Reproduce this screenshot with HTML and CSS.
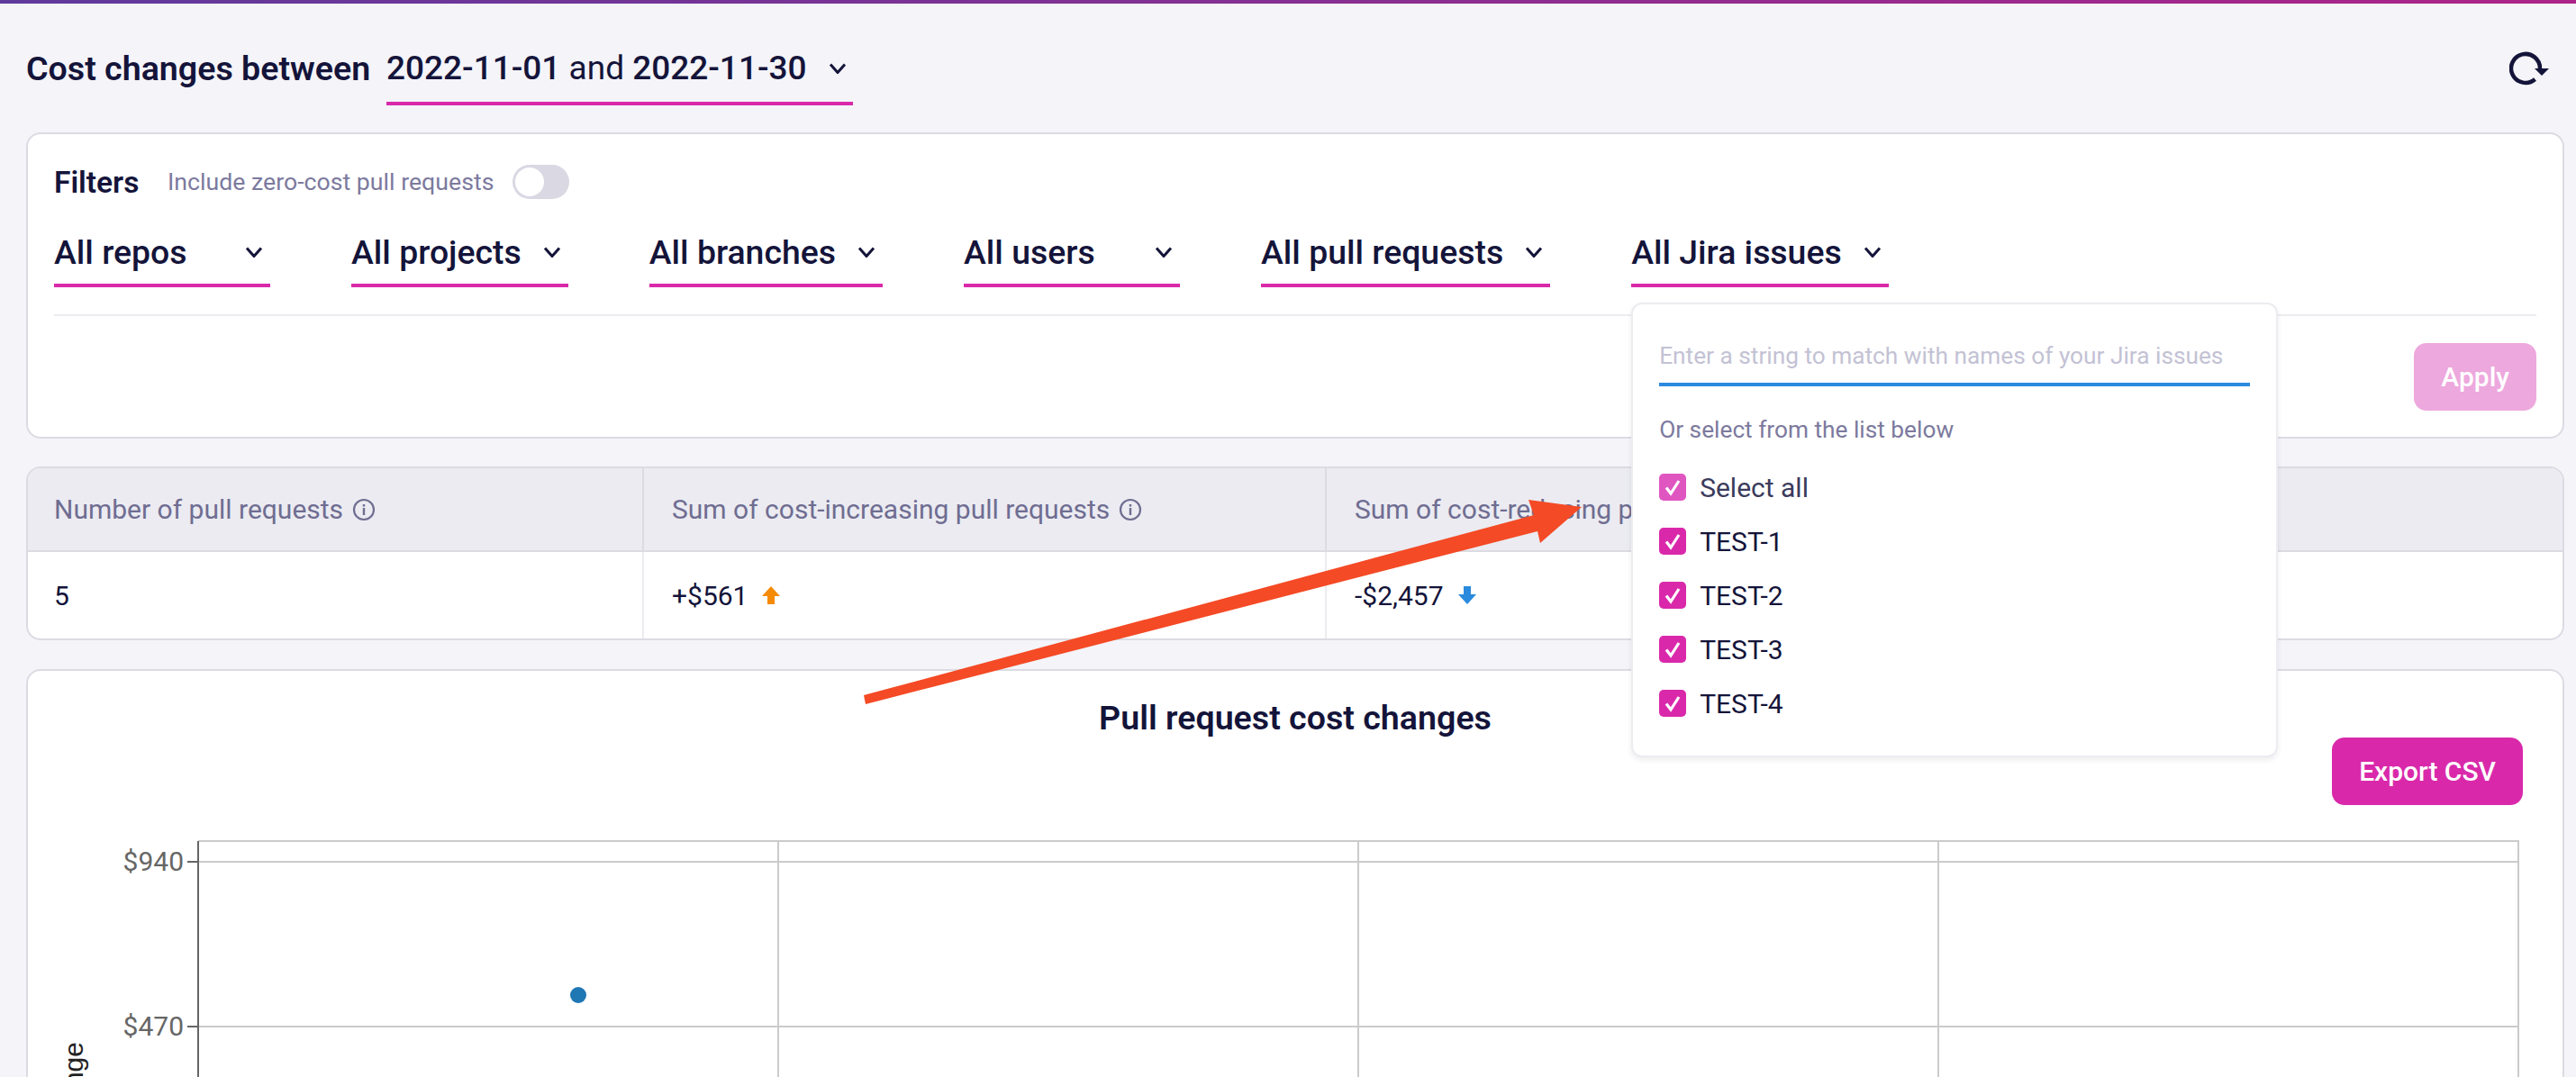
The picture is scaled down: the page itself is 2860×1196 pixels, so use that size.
FILE: index.html
```html
<!DOCTYPE html>
<html lang="en">
<head>
    <meta charset="UTF-8">
    <link rel="stylesheet" href="styles.css">
    <title>Cost changes</title>
</head>
<body>
    <svg class="defs" width="0" height="0">
        <symbol id="chev" viewBox="0 0 20 12"><path d="M2 1.500 10 10.500 18 1.500" fill="none" stroke="currentColor" stroke-width="3"/></symbol>
        <symbol id="info" viewBox="0 0 26 26"><circle cx="13" cy="13" r="11" fill="none" stroke="currentColor" stroke-width="2.200"/><rect x="11.800" y="11" width="2.400" height="8" fill="currentColor"/><rect x="11.800" y="7" width="2.400" height="2.500" fill="currentColor"/></symbol>
        <symbol id="tick" viewBox="0 0 30 30"><path d="M8 15.500 13 22 22 8" fill="none" stroke="#fff" stroke-width="3.200"/></symbol>
        <symbol id="arrow" viewBox="0 0 20 20"><path d="M10 0 20 11H14V20H6V11H0Z" fill="currentColor"/></symbol>
    </svg>

    <div class="topbar"></div>

    <main class="page">
        <header class="head">
            <h1 class="head-title">Cost changes between</h1>
            <div class="select select-date">
                <span><b>2022-11-01</b> and <b>2022-11-30</b></span>
                <svg class="chev"><use href="#chev"/></svg>
            </div>
            <svg class="refresh" viewBox="0 0 44 44">
                <path d="M28.500 33A16 16 0 1 1 34 21" fill="none" stroke="currentColor" stroke-width="4.500"/>
                <path d="M28 21H44L36 29Z" fill="currentColor"/>
            </svg>
        </header>

        <section class="card filters">
            <div class="filters-top">
                <h2 class="filters-title">Filters</h2>
                <span class="filters-hint">Include zero-cost pull requests</span>
                <span class="toggle"><span class="knob"></span></span>
            </div>
            <div class="filters-row">
                <div class="select select-m"><span>All repos</span><svg class="chev"><use href="#chev"/></svg></div>
                <div class="select select-m"><span>All projects</span><svg class="chev"><use href="#chev"/></svg></div>
                <div class="select select-m"><span>All branches</span><svg class="chev"><use href="#chev"/></svg></div>
                <div class="select select-m"><span>All users</span><svg class="chev"><use href="#chev"/></svg></div>
                <div class="select select-m"><span>All pull requests</span><svg class="chev"><use href="#chev"/></svg></div>
                <div class="jira">
                    <div class="select select-m"><span>All Jira issues</span><svg class="chev"><use href="#chev"/></svg></div>
                    <div class="popup">
                        <input class="popup-input" type="text" placeholder="Enter a string to match with names of your Jira issues">
                        <p class="popup-note">Or select from the list below</p>
                        <div class="check-row check-row-all"><span class="check check-all"><svg><use href="#tick"/></svg></span>Select all</div>
                        <div class="check-row"><span class="check"><svg><use href="#tick"/></svg></span>TEST-1</div>
                        <div class="check-row"><span class="check"><svg><use href="#tick"/></svg></span>TEST-2</div>
                        <div class="check-row"><span class="check"><svg><use href="#tick"/></svg></span>TEST-3</div>
                        <div class="check-row"><span class="check"><svg><use href="#tick"/></svg></span>TEST-4</div>
                    </div>
                </div>
            </div>
            <div class="filters-foot">
                <button class="btn btn-off">Apply</button>
            </div>
        </section>

        <section class="card stats">
            <div class="stats-head">
                <div class="cell">Number of pull requests <svg class="info"><use href="#info"/></svg></div>
                <div class="cell">Sum of cost-increasing pull requests <svg class="info"><use href="#info"/></svg></div>
                <div class="cell">Sum of cost-reducing pull requests <svg class="info"><use href="#info"/></svg></div>
                <div class="cell">Net cost change <svg class="info"><use href="#info"/></svg></div>
            </div>
            <div class="stats-body">
                <div class="cell">5</div>
                <div class="cell">+$561 <svg class="trend up"><use href="#arrow"/></svg></div>
                <div class="cell">-$2,457 <svg class="trend down"><use href="#arrow"/></svg></div>
                <div class="cell">-$1,896</div>
            </div>
        </section>

        <section class="card chart">
            <h2 class="chart-title">Pull request cost changes</h2>
            <div class="chart-actions"><button class="btn">Export CSV</button></div>
            <svg class="plot" viewBox="31 900 2814 296">
                <g class="grid">
                    <path d="M220 934H2796V1196"/>
                    <path d="M864 934V1196M1508 934V1196M2152 934V1196"/>
                    <path d="M220 957H2796M220 1140H2796"/>
                </g>
                <path class="axis" d="M220 934V1196M208 957H220M208 1140H220"/>
                <text class="tick-label" x="204" y="967">$940</text>
                <text class="tick-label" x="204" y="1150">$470</text>
                <text class="axis-label" transform="translate(92 1157) rotate(-90)">Cost change</text>
                <circle cx="642" cy="1105" r="9" fill="#1f77b4"/>
            </svg>
        </section>
    </main>

    <svg class="annotation" viewBox="0 0 2860 1196">
        <polygon points="959,772 961,782 1707,590 1710,603 1756,563 1697,555 1703,572" fill="#f44a25"/>
    </svg>
</body>
</html>
```

FILE: styles.css
```css
*{
    box-sizing:border-box;
    margin:0;
    font-family:Roboto, sans-serif;
}
body{
    width:2860px;
    height:1196px;
    overflow:hidden;
    position:relative;
    background:#f4f4f9;
    color:#14143a;
}
.defs{
    position:absolute;
}
.topbar{
    height:4px;
    background:linear-gradient(90deg, #5f3a9c, #ad2489);
}
.page{
    padding:50px 13px 0 29px;
}

/* header */
.head{
    display:flex;
    align-items:flex-start;
    margin-bottom:30px;
}
.head-title{
    width:381px;
    font-size:37.600px;
    font-weight:600;
    line-height:44px;
    margin-right:19px;
    white-space:nowrap;
}
.select{
    display:flex;
    justify-content:space-between;
    align-items:center;
    gap:24px;
    min-width:240px;
    height:63px;
    padding:0 8px 15px 0;
    border-bottom:4px solid #d929aa;
    font-size:37.400px;
    font-weight:500;
    line-height:44px;
    white-space:nowrap;
}
.select-date{
    width:518px;
    font-size:37px;
    font-weight:400;
}
.select-date b{
    font-weight:500;
}
.select-m{
    height:61px;
    padding-bottom:13px;
}
.chev{
    width:20px;
    height:12px;
    flex:none;
    color:#14143a;
}
.refresh{
    width:44px;
    height:44px;
    margin:1px 17px 0 auto;
    color:#14143a;
}

/* cards */
.card{
    background:#fff;
    border:2px solid #dcdbe3;
    border-radius:16px;
}
.filters{
    height:340px;
    padding:34px 29px 29px;
}
.filters-top{
    display:flex;
    align-items:center;
    height:38px;
    margin-bottom:37px;
}
.filters-title{
    width:95px;
    font-size:33.500px;
    font-weight:600;
    margin-right:31px;
}
.filters-hint{
    font-size:26.700px;
    color:#7c7a9e;
    margin-right:21px;
}
.toggle{
    display:block;
    width:63px;
    height:38px;
    padding:3px;
    border-radius:19px;
    background:#d9d8e3;
}
.knob{
    display:block;
    width:32px;
    height:32px;
    border-radius:50%;
    background:#fff;
}
.filters-row{
    display:flex;
    gap:90px;
    padding-bottom:30px;
    border-bottom:2px solid #ececf1;
}
.jira{
    position:relative;
}
.filters-foot{
    display:flex;
    justify-content:flex-end;
    padding-top:30px;
}
.btn{
    height:75px;
    padding:0 30px;
    border:none;
    border-radius:14px;
    background:#d929aa;
    color:#fff;
    font-size:30px;
    font-weight:500;
}
.btn-off{
    background:#eda8dd;
}

/* jira dropdown */
.popup{
    position:absolute;
    z-index:5;
    top:78px;
    left:0;
    width:718px;
    height:505px;
    padding:27px 29px 0;
    background:#fff;
    border:2px solid #ececf1;
    border-radius:12px;
    box-shadow:0 3px 6px rgba(30, 30, 70, 0.08);
}
.popup-input{
    display:block;
    width:100%;
    height:64px;
    padding:0;
    border:none;
    border-bottom:4px solid #2a8ade;
    outline:none;
    font-size:26.250px;
    background:transparent;
}
.popup-input::placeholder{
    color:#c3c2d4;
    opacity:1;
}
.popup-note{
    margin:30px 0 16px;
    font-size:26.250px;
    line-height:36px;
    color:#7c7a9e;
}
.check-row{
    display:flex;
    align-items:center;
    gap:15px;
    height:60px;
    font-size:30px;
}
.check-row-all{
    color:#3b3b5c;
}
.check{
    display:block;
    width:30px;
    height:30px;
    border-radius:5px;
    background:#d929aa;
}
.check svg{
    display:block;
    width:30px;
    height:30px;
}
.check-all{
    background:#e056c0;
}

/* stats table */
.stats{
    margin-top:31px;
    height:193px;
    overflow:hidden;
}
.stats-head,
.stats-body{
    display:grid;
    grid-template-columns:684px 758px 760px 1fr;
}
.stats-head{
    height:93px;
    background:#ebebf1;
    border-bottom:2px solid #dcdbe3;
    color:#6f6d91;
}
.stats-body{
    height:98px;
}
.cell{
    display:flex;
    align-items:center;
    gap:10px;
    padding-left:29px;
    font-size:30px;
    border-right:2px solid #ececf1;
}
.stats-body .cell{
    padding-bottom:2px;
}
.stats-head .cell{
    border-right-color:#dcdbe3;
}
.cell + .cell{
    padding-left:31px;
}
.cell:last-child{
    border-right:none;
}
.info{
    width:26px;
    height:26px;
    color:#6f6d91;
}
.trend{
    width:20px;
    height:20px;
    margin-left:6px;
}
.up{
    color:#f58a07;
}
.down{
    color:#2a8ade;
    transform:rotate(180deg);
}

/* chart */
.chart{
    margin-top:32px;
    height:500px;
    padding-top:31px;
}
.chart-title{
    font-size:37.600px;
    font-weight:600;
    line-height:42px;
    margin-bottom:1px;
    text-align:center;
}
.chart-actions{
    display:flex;
    justify-content:flex-end;
    padding-right:44px;
}
.plot{
    display:block;
    width:2814px;
    height:296px;
    margin-top:6px;
}
.grid path{
    fill:none;
    stroke:#cbcbcb;
    stroke-width:2;
}
.axis{
    fill:none;
    stroke:#666;
    stroke-width:2;
}
.tick-label{
    font-size:30px;
    fill:#666;
    text-anchor:end;
}
.axis-label{
    font-family:"Liberation Sans", sans-serif;
    font-size:30px;
    fill:#222;
    text-anchor:end;
}

/* arrow drawn on top of the screenshot */
.annotation{
    position:absolute;
    z-index:4;
    top:0;
    left:0;
    width:2860px;
    height:1196px;
    pointer-events:none;
}
```
